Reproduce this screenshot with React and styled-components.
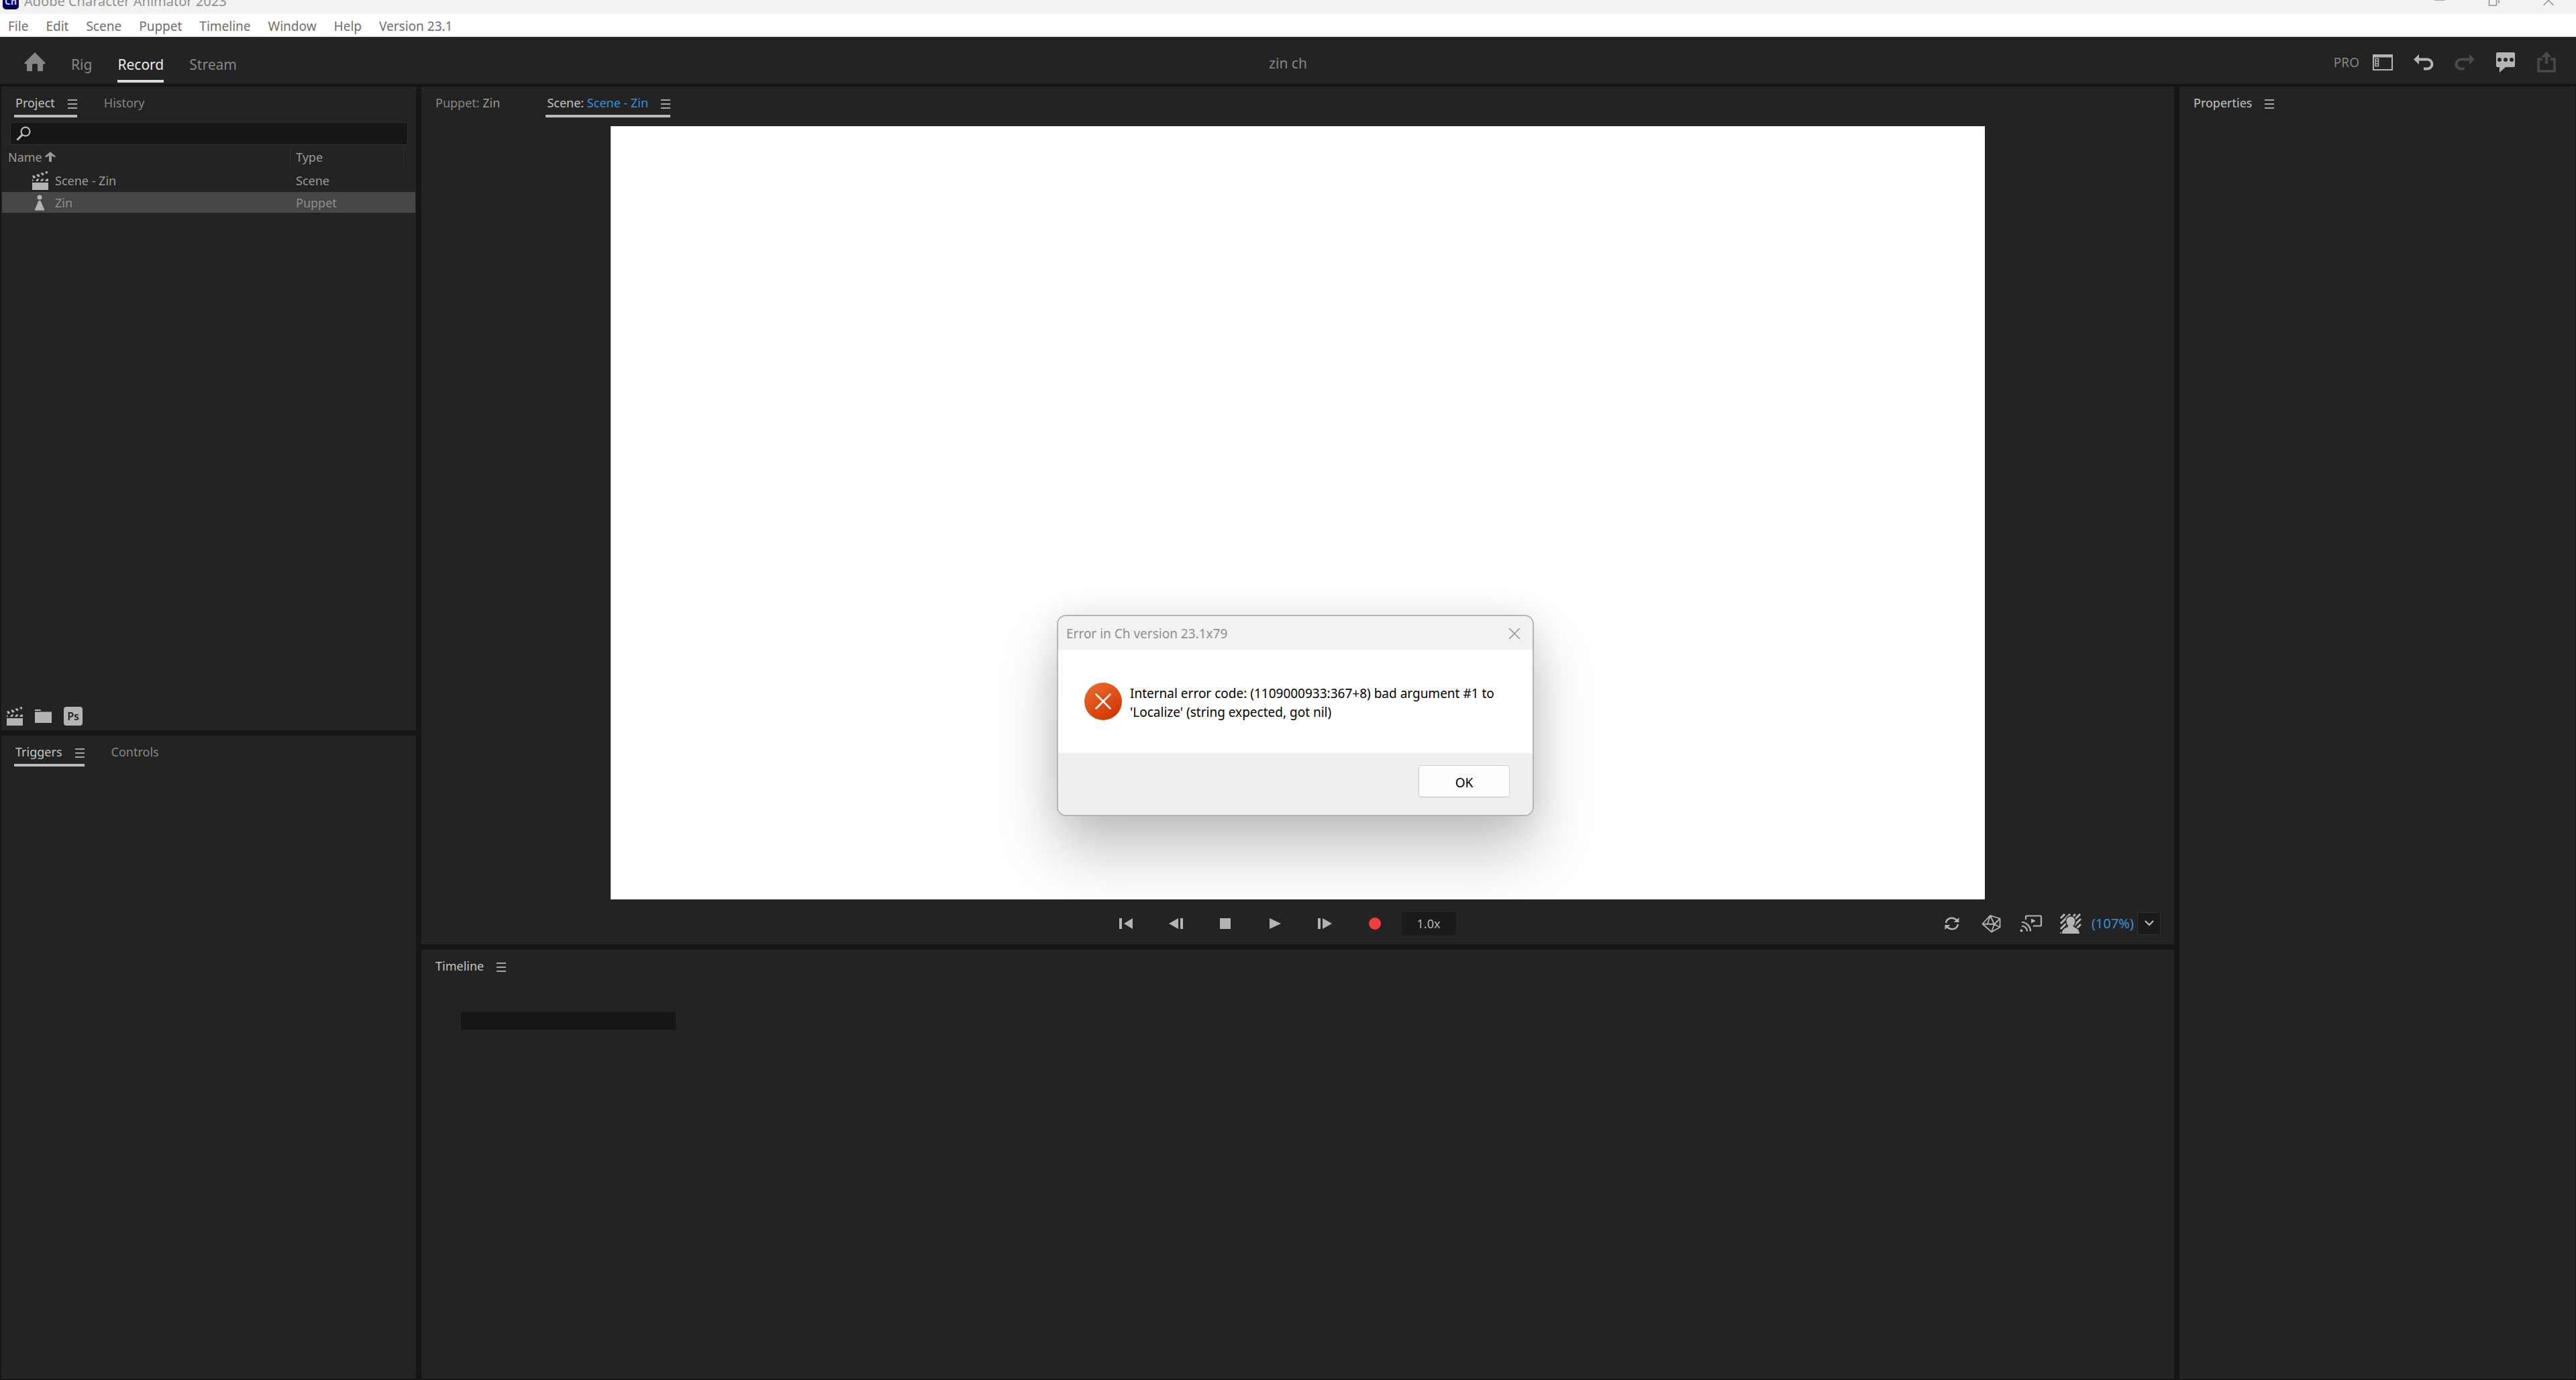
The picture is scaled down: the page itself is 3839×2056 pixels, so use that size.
import { useState } from "react";
import styled, { createGlobalStyle } from "styled-components";

const GlobalStyle = createGlobalStyle`
  * {
    box-sizing: border-box;
  }
  body {
    margin: 0;
    background: #161616;
    color: #9a9a9a;
    font-family: "Noto Sans", "Open Sans", sans-serif;
    font-size: 18px;
    line-height: 24px;
  }
  button, input, select {
    font: inherit;
    color: inherit;
    margin: 0;
    padding: 0;
    border: none;
    background: none;
    cursor: pointer;
  }
  svg {
    display: block;
    flex: none;
  }
`;

const Container = styled.div`
  min-height: 100vh;
  display: flex;
  flex-direction: column;
`;

/* window frame */

const TitleBar = styled.header`
  height: 21px;
  padding: 0 1px 7px 4px;
  display: flex;
  align-items: flex-end;
  overflow: hidden;
  background: #f2f2f2;
  color: #8f8f8f;
`;

const AppLogo = styled.span`
  flex: none;
  width: 24px;
  height: 24px;
  margin-right: 8px;
  border-radius: 5px;
  background: #00005b;
  color: #c5c5ff;
  font-size: 14px;
  font-weight: 700;
  text-align: center;
`;

const AppTitle = styled.span`
  flex: 1;
  font-size: 20px;
`;

const WindowButton = styled.button`
  width: 81px;
  display: flex;
  justify-content: center;
`;

const MenuBar = styled.nav`
  height: 34px;
  padding: 3px 12px 0;
  display: flex;
  align-items: center;
  gap: 26px;
  background: #fff;
  border-bottom: 2px solid #f2f2f2;
  color: #6e6e6e;
  font-size: 19px;
`;

const ToolBar = styled.div`
  height: 70px;
  display: grid;
  grid-template-columns: 1fr auto 1fr;
  align-items: center;
  background: #232323;
  color: #868686;
`;

const Modes = styled.div`
  align-self: end;
  display: flex;
  align-items: flex-end;
  gap: 38px;
  padding: 0 0 2px 36px;
`;

const HomeButton = styled.button`
  padding-bottom: 17px;
`;

const Mode = styled.button`
  padding-bottom: 9px;
  border-bottom: 4px solid ${(p) => (p.$active ? "#dcdcdc" : "transparent")};
  color: ${(p) => (p.$active ? "#ececec" : "#868686")};
  font-size: 21px;
  line-height: 28px;
`;

const ProjectTitle = styled.h1`
  margin: 0;
  padding-top: 8px;
  font-size: 21px;
  font-weight: 400;
  line-height: 28px;
`;

const Actions = styled.div`
  display: flex;
  justify-content: flex-end;
  align-items: center;
  gap: 31px;
  padding: 6px 29px 0 0;
  color: #b4b4b4;
`;

const Workspace = styled.label`
  display: flex;
  align-items: center;
  gap: 20px;
  color: #868686;
  font-size: 19px;
`;

const IconButton = styled.button`
  color: ${(p) => (p.disabled ? "#4a4a4a" : "#b4b4b4")};
`;

/* panels */

const Main = styled.main`
  flex: 1;
  display: grid;
  grid-template-columns: 618px minmax(0, 1fr) 590px;
  gap: 8px;
  padding: 4px 1px 2px 2px;
`;

const Column = styled.div`
  display: flex;
  flex-direction: column;
  gap: 8px;
`;

const Panel = styled.section`
  flex: ${(p) => (p.$fit ? "none" : "1 1 0")};
  display: flex;
  flex-direction: column;
  background: #232323;
`;

const Tabs = styled.div`
  display: flex;
  gap: ${(p) => p.$gap || 38}px;
  padding: 12px 0 0 19px;
`;

const Tab = styled.div`
  display: flex;
  align-items: center;
  gap: 19px;
  padding-bottom: 6px;
  border-bottom: 4px solid ${(p) => (p.$active ? "#b9b9b9" : "transparent")};
`;

const TabLabel = styled.button`
  padding-left: 2px;
  color: ${(p) => (p.$bright ? "#c4c4c4" : "#868686")};
`;

const SceneName = styled.span`
  color: ${(p) => (p.$link ? "#3d8fdc" : "#9a9a9a")};
`;

const MenuButton = styled.button`
  padding-top: 4px;
  color: #a4a4a4;
`;

const Search = styled.label`
  height: 34px;
  margin: 7px 12px 0 13px;
  padding: 0 8px;
  display: flex;
  align-items: center;
  gap: 8px;
  background: #161616;
  border: 1px solid #303030;
  border-radius: 3px;
  color: #c4c4c4;
`;

const SearchInput = styled.input`
  flex: 1;
  outline: none;
  cursor: text;
`;

const Items = styled.table`
  width: calc(100% - 2px);
  margin-left: 1px;
  border-spacing: 0;
  table-layout: fixed;
  text-align: left;
`;

const HeadCell = styled.th`
  width: ${(p) => p.$width || "auto"};
  height: 36px;
  padding: 4px 0;
  font-weight: 400;
`;

const HeadLabel = styled.div`
  height: 28px;
  display: flex;
  align-items: center;
  gap: 4px;
  padding-left: 8px;
  border-left: 1px solid ${(p) => (p.$first ? "transparent" : "#303030")};
`;

const Item = styled.tr`
  background: ${(p) => (p.$selected ? "#464646" : "transparent")};
  color: ${(p) => (p.$selected ? "#8f8f8f" : "#9a9a9a")};
`;

const ItemCell = styled.td`
  height: 33px;
  padding: 0 0 0 9px;
  border-top: 1px solid #1f1f1f;
  border-bottom: 1px solid #232323;
`;

const ItemName = styled.div`
  display: flex;
  align-items: center;
  gap: 10px;
  padding-left: 36px;
`;

const PanelFooter = styled.div`
  margin-top: auto;
  display: flex;
  align-items: center;
  gap: 18px;
  padding: 0 0 7px 8px;
`;

const PhotoshopButton = styled.button`
  width: 28px;
  height: 28px;
  border-radius: 4px;
  background: #b4b4b4;
  color: #232323;
  font-size: 16px;
  font-weight: 600;
`;

const Stage = styled.div`
  width: calc(100% - 564px);
  aspect-ratio: 16 / 9;
  margin: 13px auto 0;
  background: #fff;
`;

const Playback = styled.div`
  height: 67px;
  padding: 4px 20px 0;
  display: grid;
  grid-template-columns: 1fr auto 1fr;
  align-items: center;
`;

const Transport = styled.div`
  grid-column: 2;
  display: flex;
  align-items: center;
  gap: 34px;
  padding-right: 40px;
`;

const TransportButton = styled.button`
  width: 40px;
  display: flex;
  justify-content: center;
  color: #b4b4b4;
`;

const Speed = styled.input`
  width: 81px;
  height: 34px;
  margin-left: -14px;
  background: #1a1a1a;
  border-radius: 3px;
  color: #b4b4b4;
  text-align: center;
`;

const ViewOptions = styled.div`
  display: flex;
  justify-content: flex-end;
  align-items: center;
  gap: 23px;
`;

const Zoom = styled.label`
  position: relative;
  margin-left: -10px;
`;

const ZoomSelect = styled.select`
  width: 103px;
  height: 34px;
  appearance: none;
  color: #3d8fdc;
  font-size: 20px;
`;

const ZoomArrow = styled.span`
  position: absolute;
  top: 0;
  right: 0;
  width: 35px;
  height: 34px;
  display: grid;
  place-items: center;
  background: #1a1a1a;
  border: 1px solid #303030;
  border-radius: 3px;
  color: #c4c4c4;
  pointer-events: none;
`;

const Track = styled.div`
  width: 320px;
  height: 26px;
  margin: 47px 0 0 59px;
  background: #161616;
`;

/* error window */

const Dialog = styled.section`
  position: absolute;
  left: 1575px;
  top: 916px;
  width: 711px;
  border: 2px solid #b4b4b4;
  border-radius: 14px;
  background: #fff;
  box-shadow: 0 50px 90px rgba(0, 0, 0, 0.24), 0 0 50px rgba(0, 0, 0, 0.08);
  color: #000;
  font-size: 19px;
  overflow: hidden;
`;

const DialogHeader = styled.header`
  height: 50px;
  padding: 2px 18px 0 12px;
  display: flex;
  align-items: center;
  justify-content: space-between;
  background: #f2f2f2;
  color: #8f8f8f;
`;

const DialogTitle = styled.h2`
  margin: 0;
  font-size: 19px;
  font-weight: 400;
`;

const DialogBody = styled.div`
  height: 154px;
  padding: 0 24px 0 39px;
  display: flex;
  align-items: center;
  gap: 12px;
`;

const Message = styled.p`
  margin: 0;
  padding-top: 4px;
  line-height: 28px;
`;

const DialogFooter = styled.footer`
  height: 92px;
  padding: 18px 34px 0;
  display: flex;
  justify-content: flex-end;
  background: #efefef;
`;

const OkButton = styled.button`
  width: 136px;
  height: 48px;
  padding-top: 3px;
  background: #fdfdfd;
  border: 1px solid #cfcfcf;
  border-bottom-color: #b9b9b9;
  border-radius: 5px;
`;

const HomeIcon = () => (
  <svg width="32" height="28" viewBox="0 0 32 28" fill="currentColor">
    <path d="M16 0 32 16l-2 1.500h-2V27q0 1-1 1h-7v-9q0-2-2-2h-4q-2 0-2 2v9H5q-1 0-1-1v-9.500H2L0 16z" />
  </svg>
);

const MenuIcon = () => (
  <svg width="14" height="14" viewBox="0 0 14 14" fill="currentColor">
    <path d="M0 0h14v2H0zM0 6h14v2H0zM0 12h14v2H0z" />
  </svg>
);

const WorkspaceIcon = () => (
  <svg width="30" height="24" viewBox="0 0 30 24" fill="none" stroke="#b4b4b4">
    <path d="M1 1h28v22H1z" strokeWidth="2" />
    <path d="M0 2.500h30" strokeWidth="4" />
    <path d="M4 6.500h4.500v11H4zM4 10h4.500M4 14h4.500" strokeWidth="1.500" />
  </svg>
);

const UndoIcon = ({ flip }) => (
  <svg width="30" height="26" viewBox="0 0 30 26">
    <g transform={flip ? "matrix(-1 0 0 1 30 0)" : undefined}>
      <path d="M0 8.500 8 1v15z" fill="currentColor" />
      <path d="M6 8.500h14.500a7 7 0 0 1 0 14H15" fill="none" stroke="currentColor" strokeWidth="4" />
    </g>
  </svg>
);

const ChatIcon = () => (
  <svg width="30" height="32" viewBox="0 0 30 32">
    <path d="M3 1h24q2 0 2 2v18q0 2-2 2H15l-9 8v-8H3q-2 0-2-2V3q0-2 2-2z" fill="currentColor" />
    <g fill="#232323">
      <circle cx="6" cy="12" r="3" />
      <circle cx="15" cy="12" r="3" />
      <circle cx="24" cy="12" r="3" />
    </g>
  </svg>
);

const ShareIcon = () => (
  <svg width="30" height="32" viewBox="0 0 30 32">
    <path d="M9 11H3v18h24V11h-6" fill="none" stroke="currentColor" strokeWidth="3.500" />
    <path d="M15 0l8 8h-6v10h-4V8H7z" fill="currentColor" />
  </svg>
);

const SearchIcon = () => (
  <svg width="22" height="22" viewBox="0 0 22 22" fill="none" stroke="currentColor">
    <circle cx="14" cy="8" r="6.500" strokeWidth="2" />
    <path d="M9.500 12.500 1.500 20.500" strokeWidth="3" />
  </svg>
);

const SortIcon = () => (
  <svg width="16" height="16" viewBox="0 0 16 16" fill="currentColor">
    <path d="M8 0l8 7-1.500 1.500L10 6v9H6V6L1.500 8.500 0 7z" />
  </svg>
);

const ClapperIcon = () => (
  <svg width="24" height="28" viewBox="0 0 24 28" fill="#b4b4b4">
    <path d="M0 17h24v11H0zM0 15v-4l2 4zM5 15l2-3.500h3.500L8.500 15zM12 15l2-3.500h3.500L15.500 15zM19 15l2-3.500h3V15zM0 7l2.500-1 3 3.500L2 11zM6 5.500 9 4l3 3.500L9 9zM12.500 3l3-1 2.500 3-3 1.500zM19 1l4-1v3l-2 1z" />
  </svg>
);

const PuppetIcon = () => (
  <svg width="24" height="24" viewBox="0 0 24 24" fill="#b4b4b4">
    <circle cx="11" cy="4" r="3.500" />
    <path d="M9.500 9h3L18 22q.5 1.500-1 1.500H5Q3.500 23.500 4 22z" />
  </svg>
);

const FolderIcon = () => (
  <svg width="25" height="20" viewBox="0 0 25 20" fill="#b4b4b4">
    <path d="M0 0h8l1.500 2H0zM0 3.500h25V20H0z" />
  </svg>
);

const RefreshIcon = () => (
  <svg width="36" height="30" viewBox="0 0 36 30" fill="none" stroke="#b4b4b4" strokeWidth="2.500">
    <path d="M9 14a9 8.500 0 0 1 16-4M27 16a9 8.500 0 0 1-16 4" />
    <path d="M28.500 6v7h-8zM7.500 24v-7h8z" fill="#b4b4b4" stroke="none" />
  </svg>
);

const MeshIcon = () => (
  <svg width="36" height="30" viewBox="0 0 36 30" fill="none" stroke="#b4b4b4" strokeWidth="1.800">
    <path
      d="M4.500 15.500 16 3l14.500 4.500V20.500L18 27.500zM4.500 15.500 22 16 16 3M30.500 7.500 22 16l8.500 4.500M22 16l-4 11.500M16 3 12 15.500"
      strokeLinejoin="round"
    />
  </svg>
);

const CastIcon = () => (
  <svg width="36" height="30" viewBox="0 0 36 30" fill="none" stroke="#b4b4b4" strokeWidth="2.200">
    <path d="M10 9V5q0-1.500 1.500-1.500h20Q33 3.500 33 5v12q0 1.500-1.500 1.500H21" />
    <path d="M18 7.500v7l7-3.500z" fill="#b4b4b4" stroke="none" />
    <path d="M4 18.500a8 8 0 0 1 8 8M4 13a13.500 13.500 0 0 1 13 13.500" />
    <circle cx="3.500" cy="25.500" r="2" fill="#b4b4b4" stroke="none" />
  </svg>
);

const PersonIcon = () => (
  <svg width="36" height="30" viewBox="0 0 36 30">
    <path
      d="M3 7l6-6M3 15 17 1M3 23 25 1M3 30 32 1M22 19 33 8M27 22l6-6"
      stroke="#b4b4b4"
      strokeWidth="3"
      fill="none"
    />
    <path
      d="M18 4.500c4 0 6.500 3 6.500 7 0 3-1.500 5.500-3 7 0 3 9.500 2 9.500 11.500H5c0-9.500 9.500-8.500 9.500-11.500-1.500-1.500-3-4-3-7 0-4 2.500-7 6.500-7z"
      fill="#b4b4b4"
      stroke="#232323"
      strokeWidth="3"
      paintOrder="stroke"
    />
  </svg>
);

const ChevronIcon = () => (
  <svg width="14" height="9" viewBox="0 0 14 9" fill="none" stroke="currentColor" strokeWidth="2">
    <path d="M1 1l6 6 6-6" />
  </svg>
);

const ErrorIcon = () => (
  <svg width="56" height="56" viewBox="0 0 56 56">
    <defs>
      <linearGradient id="error" x1="0.2" y1="0" x2="0.8" y2="1">
        <stop offset="0" stopColor="#ea6a2c" />
        <stop offset="1" stopColor="#d03400" />
      </linearGradient>
    </defs>
    <circle cx="28" cy="28" r="28" fill="url(#error)" />
    <path d="M17.500 17.500l21 21m0-21-21 21" stroke="#fff" strokeWidth="2.500" strokeLinecap="round" />
  </svg>
);

const menus = ["File", "Edit", "Scene", "Puppet", "Timeline", "Window", "Help", "Version 23.1"];

const modes = ["Rig", "Record", "Stream"];

const windowControls = [
  { name: "Minimize", path: "M4.500 10h15" },
  { name: "Restore", path: "M4.500 4h11v14h-11zM7 2h12v13" },
  { name: "Close", path: "M4.500 3l15 15m0-15-15 15" },
];

const transport = [
  { name: "Go to start", path: "M0 0h4v16H0zM20 0v16L7 8z" },
  { name: "Step back", path: "M0 8 14 0v16zM17 0h4v16h-4z" },
  { name: "Stop", path: "M2 0h16v16H2z" },
  { name: "Play", path: "M2 0l17 8-17 8z" },
  { name: "Step forward", path: "M0 0h4v16H0zM7 0l14 8-14 8z" },
];

const items = [
  { name: "Scene - Zin", type: "Scene", Icon: ClapperIcon },
  { name: "Zin", type: "Puppet", Icon: PuppetIcon },
];

const PanelMenu = () => (
  <MenuButton aria-label="Panel menu">
    <MenuIcon />
  </MenuButton>
);

const ProjectPanel = () => {
  const [selected, setSelected] = useState("Zin");
  const [query, setQuery] = useState("");

  return (
    <Panel>
      <Tabs>
        <Tab $active>
          <TabLabel $bright>Project</TabLabel>
          <PanelMenu />
        </Tab>
        <Tab>
          <TabLabel>History</TabLabel>
        </Tab>
      </Tabs>
      <Search>
        <SearchIcon />
        <SearchInput aria-label="Search" value={query} onChange={(e) => setQuery(e.target.value)} />
      </Search>
      <Items>
        <thead>
          <tr>
            <HeadCell $width="429px">
              <HeadLabel $first>
                Name <SortIcon />
              </HeadLabel>
            </HeadCell>
            <HeadCell $width="169px">
              <HeadLabel>Type</HeadLabel>
            </HeadCell>
            <HeadCell>
              <HeadLabel />
            </HeadCell>
          </tr>
        </thead>
        <tbody>
          {items.map(({ name, type, Icon }) => (
            <Item key={name} $selected={name === selected} onClick={() => setSelected(name)}>
              <ItemCell>
                <ItemName>
                  <Icon />
                  {name}
                </ItemName>
              </ItemCell>
              <ItemCell colSpan={2}>{type}</ItemCell>
            </Item>
          ))}
        </tbody>
      </Items>
      <PanelFooter>
        <IconButton aria-label="New scene"><ClapperIcon /></IconButton>
        <IconButton aria-label="New folder"><FolderIcon /></IconButton>
        <PhotoshopButton>Ps</PhotoshopButton>
      </PanelFooter>
    </Panel>
  );
};

const ScenePanel = () => {
  const [speed, setSpeed] = useState("1.0x");

  return (
    <Panel $fit>
      <Tabs $gap={68}>
        <Tab>
          <TabLabel>
            Puppet: <SceneName>Zin</SceneName>
          </TabLabel>
        </Tab>
        <Tab $active>
          <TabLabel $bright>
            Scene: <SceneName $link>Scene - Zin</SceneName>
          </TabLabel>
          <PanelMenu />
        </Tab>
      </Tabs>
      <Stage />
      <Playback>
        <Transport>
          {transport.map(({ name, path }) => (
            <TransportButton key={name} aria-label={name}>
              <svg width="21" height="16" viewBox="0 0 21 16" fill="currentColor">
                <path d={path} />
              </svg>
            </TransportButton>
          ))}
          <TransportButton aria-label="Record take">
            <svg width="18" height="18" viewBox="0 0 18 18">
              <circle cx="9" cy="9" r="9" fill="#f43d3d" />
            </svg>
          </TransportButton>
          <Speed aria-label="Speed" value={speed} onChange={(e) => setSpeed(e.target.value)} />
        </Transport>
        <ViewOptions>
          <IconButton aria-label="Refresh"><RefreshIcon /></IconButton>
          <IconButton aria-label="Show mesh"><MeshIcon /></IconButton>
          <IconButton aria-label="Stream output"><CastIcon /></IconButton>
          <IconButton aria-label="Transparency"><PersonIcon /></IconButton>
          <Zoom>
            <ZoomSelect aria-label="Zoom level">
              <option>(107%)</option>
            </ZoomSelect>
            <ZoomArrow>
              <ChevronIcon />
            </ZoomArrow>
          </Zoom>
        </ViewOptions>
      </Playback>
    </Panel>
  );
};

const ErrorDialog = ({ onClose }) => (
  <Dialog role="alertdialog" aria-labelledby="error-title">
    <DialogHeader>
      <DialogTitle id="error-title">Error in Ch version 23.1x79</DialogTitle>
      <button aria-label="Close error" onClick={onClose}>
        <svg width="18" height="18" viewBox="0 0 18 18" stroke="#8f8f8f" strokeWidth="1.500">
          <path d="M1 1l16 16m0-16L1 17" />
        </svg>
      </button>
    </DialogHeader>
    <DialogBody>
      <ErrorIcon />
      <Message>
        Internal error code: (1109000933:367+8) bad argument #1 to 'Localize' (string expected, got nil)
      </Message>
    </DialogBody>
    <DialogFooter>
      <OkButton onClick={onClose}>OK</OkButton>
    </DialogFooter>
  </Dialog>
);

const App = () => {
  const [mode, setMode] = useState("Record");
  const [error, setError] = useState(true);

  return (
    <Container>
      <GlobalStyle />
      <TitleBar>
        <AppLogo>Ch</AppLogo>
        <AppTitle>Adobe Character Animator 2023</AppTitle>
        {windowControls.map(({ name, path }) => (
          <WindowButton key={name} aria-label={name}>
            <svg width="24" height="24" viewBox="0 0 24 24" fill="none" stroke="#8f8f8f" strokeWidth="1.500">
              <path d={path} />
            </svg>
          </WindowButton>
        ))}
      </TitleBar>
      <MenuBar>
        {menus.map((menu) => (
          <button key={menu}>{menu}</button>
        ))}
      </MenuBar>
      <ToolBar>
        <Modes>
          <HomeButton aria-label="Home"><HomeIcon /></HomeButton>
          {modes.map((m) => (
            <Mode key={m} $active={m === mode} onClick={() => setMode(m)}>
              {m}
            </Mode>
          ))}
        </Modes>
        <ProjectTitle>zin ch</ProjectTitle>
        <Actions>
          <Workspace>
            PRO
            <IconButton aria-label="Workspace"><WorkspaceIcon /></IconButton>
          </Workspace>
          <IconButton aria-label="Undo"><UndoIcon /></IconButton>
          <IconButton aria-label="Redo" disabled><UndoIcon flip /></IconButton>
          <IconButton aria-label="Feedback"><ChatIcon /></IconButton>
          <IconButton aria-label="Share" disabled><ShareIcon /></IconButton>
        </Actions>
      </ToolBar>
      <Main>
        <Column>
          <ProjectPanel />
          <Panel>
            <Tabs>
              <Tab $active>
                <TabLabel $bright>Triggers</TabLabel>
                <PanelMenu />
              </Tab>
              <Tab>
                <TabLabel>Controls</TabLabel>
              </Tab>
            </Tabs>
          </Panel>
        </Column>
        <Column>
          <ScenePanel />
          <Panel>
            <Tabs>
              <Tab>
                <TabLabel $bright>Timeline</TabLabel>
                <PanelMenu />
              </Tab>
            </Tabs>
            <Track />
          </Panel>
        </Column>
        <Panel>
          <Tabs>
            <Tab>
              <TabLabel $bright>Properties</TabLabel>
              <PanelMenu />
            </Tab>
          </Tabs>
        </Panel>
      </Main>
      {error && <ErrorDialog onClose={() => setError(false)} />}
    </Container>
  );
};

export default App;
